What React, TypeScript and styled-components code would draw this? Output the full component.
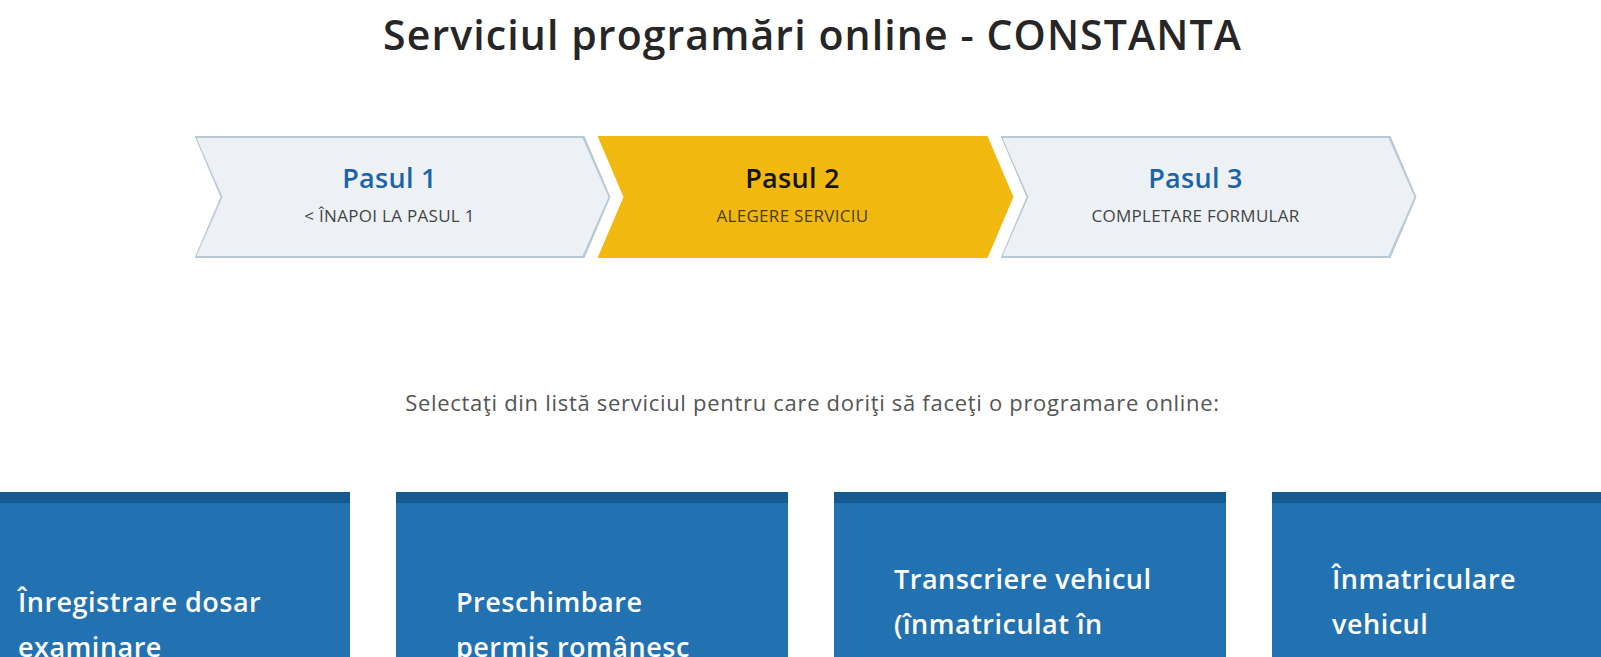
import React from "react";
import styled, { createGlobalStyle } from "styled-components";

const GlobalStyle = createGlobalStyle`
  html, body {
    margin: 0;
    overflow: hidden;
    background: #ffffff;
    font-family: "Open Sans", "Noto Sans", sans-serif;
  }
`;

const Page = styled.main`
  padding-top: 10px;
`;

const Title = styled.h1`
  margin: 0;
  padding-left: 24px;
  text-align: center;
  font-size: 41px;
  line-height: 48px;
  font-weight: 600;
  letter-spacing: 1.1px;
  color: #262626;
`;

const StepsRow = styled.div`
  display: flex;
  justify-content: center;
  margin-top: 78px;
  padding-left: 10px;
`;

const arrow =
  "polygon(0 0, calc(100% - 26px) 0, 100% 50%, calc(100% - 26px) 100%, 0 100%, 26px 50%)";

const Step = styled.div<{ $active?: boolean }>`
  flex: none;
  width: 416px;
  height: 122px;
  background: ${(p) => (p.$active ? "#f1b90f" : "#b9c8d6")};
  clip-path: ${arrow};

  & + & {
    margin-left: -13px;
  }
`;

const StepFace = styled.div<{ $active?: boolean }>`
  box-sizing: border-box;
  width: calc(100% - 4px);
  height: calc(100% - 4px);
  margin: 2px 0 2px 2px;
  padding: 24px 26px 0 0;
  display: flex;
  flex-direction: column;
  align-items: center;
  background: ${(p) => (p.$active ? "#f1b90f" : "#edf1f5")};
  clip-path: ${arrow};
`;

const StepName = styled.span<{ $active?: boolean }>`
  font-size: 27px;
  line-height: 32px;
  font-weight: 600;
  letter-spacing: 0.3px;
  color: ${(p) => (p.$active ? "#141414" : "#1c64a8")};
`;

const StepLabel = styled.span<{ $active?: boolean }>`
  margin-top: 11px;
  font-size: 17px;
  line-height: 22px;
  font-weight: 500;
  letter-spacing: 0.3px;
  text-transform: uppercase;
  color: ${(p) => (p.$active ? "#4a3d12" : "#444444")};
`;

const Intro = styled.p`
  margin: 129px 0 0;
  padding-left: 24px;
  text-align: center;
  font-size: 22px;
  line-height: 30px;
  letter-spacing: 0.7px;
  color: #555555;
`;

const Carousel = styled.div`
  margin-top: 75px;
  overflow: hidden;
`;

const Track = styled.div`
  display: flex;
  gap: 46px;
  margin-left: -42px;
`;

const Card = styled.a`
  box-sizing: border-box;
  flex: none;
  width: 392px;
  height: 252px;
  padding: 0 20px 0 60px;
  display: flex;
  flex-direction: column;
  justify-content: center;
  background: #2271b1;
  border-top: 11px solid #155b90;
  text-decoration: none;
`;

const CardLine = styled.span`
  font-size: 27px;
  line-height: 45px;
  font-weight: 600;
  letter-spacing: 0.5px;
  color: #ffffff;
  white-space: nowrap;
`;

const steps = [
  { name: "Pasul 1", label: "< Înapoi la pasul 1" },
  { name: "Pasul 2", label: "Alegere serviciu", active: true },
  { name: "Pasul 3", label: "Completare formular" },
];

const services = [
  ["Înregistrare dosar", "examinare"],
  ["Preschimbare", "permis românesc"],
  ["Transcriere vehicul", "(înmatriculat în", "România)"],
  ["Înmatriculare", "vehicul", "înmatriculat în UE"],
];

export default function App() {
  return (
    <Page>
      <GlobalStyle />
      <Title>Serviciul programări online - CONSTANTA</Title>
      <StepsRow>
        {steps.map((s) => (
          <Step key={s.name} $active={s.active}>
            <StepFace $active={s.active}>
              <StepName $active={s.active}>{s.name}</StepName>
              <StepLabel $active={s.active}>{s.label}</StepLabel>
            </StepFace>
          </Step>
        ))}
      </StepsRow>
      <Intro>
        Selectaţi din listă serviciul pentru care doriţi să faceţi o programare
        online:
      </Intro>
      <Carousel>
        <Track>
          {services.map((lines) => (
            <Card key={lines[0]} href="#">
              {lines.map((l) => (
                <CardLine key={l}>{l}</CardLine>
              ))}
            </Card>
          ))}
        </Track>
      </Carousel>
    </Page>
  );
}
